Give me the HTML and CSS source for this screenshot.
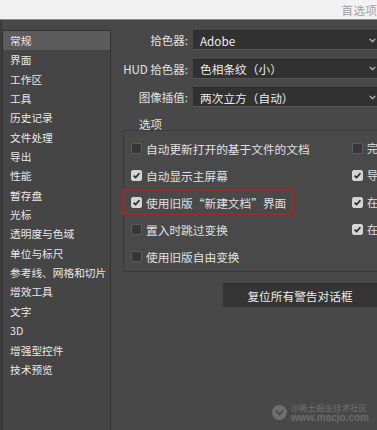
FILE: index.html
```html
<!DOCTYPE html>
<html lang="zh">
<head>
<meta charset="utf-8">
<title>首选项</title>
<link rel="stylesheet" href="styles.css">
</head>
<body>
<div class="window">
  <div class="titlebar"><span class="title">首选项</span></div>
  <div class="body">
    <nav class="sidebar">
      <div class="item selected">常规</div>
      <div class="item">界面</div>
      <div class="item">工作区</div>
      <div class="item">工具</div>
      <div class="item">历史记录</div>
      <div class="item">文件处理</div>
      <div class="item">导出</div>
      <div class="item">性能</div>
      <div class="item">暂存盘</div>
      <div class="item">光标</div>
      <div class="item">透明度与色域</div>
      <div class="item">单位与标尺</div>
      <div class="item">参考线、网格和切片</div>
      <div class="item">增效工具</div>
      <div class="item">文字</div>
      <div class="item">3D</div>
      <div class="item">增强型控件</div>
      <div class="item">技术预览</div>
    </nav>
    <main class="main">
      <div class="fields">
        <div class="field">
          <span class="field-label">拾色器:</span>
          <div class="select"><span>Adobe</span><svg class="chev" width="7" height="5" viewBox="0 0 7 5"><path d="M0.7 0.8 L3.5 3.6 L6.3 0.8" fill="none" stroke="#c4c4c4" stroke-width="1.2"/></svg></div>
        </div>
        <div class="field">
          <span class="field-label">HUD 拾色器:</span>
          <div class="select"><span>色相条纹（小）</span><svg class="chev" width="7" height="5" viewBox="0 0 7 5"><path d="M0.7 0.8 L3.5 3.6 L6.3 0.8" fill="none" stroke="#c4c4c4" stroke-width="1.2"/></svg></div>
        </div>
        <div class="field">
          <span class="field-label">图像插值:</span>
          <div class="select"><span>两次立方（自动）</span><svg class="chev" width="7" height="5" viewBox="0 0 7 5"><path d="M0.7 0.8 L3.5 3.6 L6.3 0.8" fill="none" stroke="#c4c4c4" stroke-width="1.2"/></svg></div>
        </div>
      </div>

      <section class="group">
        <div class="group-title">选项</div>
        <div class="group-box">
          <div class="opt"><span class="cb"></span><span>自动更新打开的基于文件的文档</span></div>
          <div class="opt"><span class="cb"></span><span class="edge">完</span></div>

          <div class="opt"><span class="cb on"><svg width="11" height="11" viewBox="0 0 11 11"><path d="M2.6 5.6 L4.6 7.6 L8.4 3.2" fill="none" stroke="#2a2a2a" stroke-width="1.7"/></svg></span><span>自动显示主屏幕</span></div>
          <div class="opt"><span class="cb on"><svg width="11" height="11" viewBox="0 0 11 11"><path d="M2.6 5.6 L4.6 7.6 L8.4 3.2" fill="none" stroke="#2a2a2a" stroke-width="1.7"/></svg></span><span class="edge">导</span></div>

          <div class="opt"><span class="cb on"><svg width="11" height="11" viewBox="0 0 11 11"><path d="M2.6 5.6 L4.6 7.6 L8.4 3.2" fill="none" stroke="#2a2a2a" stroke-width="1.7"/></svg></span><span>使用旧版“新建文档”界面</span><span class="mark"></span></div>
          <div class="opt"><span class="cb on"><svg width="11" height="11" viewBox="0 0 11 11"><path d="M2.6 5.6 L4.6 7.6 L8.4 3.2" fill="none" stroke="#2a2a2a" stroke-width="1.7"/></svg></span><span class="edge">在</span></div>

          <div class="opt"><span class="cb"></span><span>置入时跳过变换</span></div>
          <div class="opt"><span class="cb on"><svg width="11" height="11" viewBox="0 0 11 11"><path d="M2.6 5.6 L4.6 7.6 L8.4 3.2" fill="none" stroke="#2a2a2a" stroke-width="1.7"/></svg></span><span class="edge">在</span></div>

          <div class="opt"><span class="cb"></span><span>使用旧版自由变换</span></div>
          <div class="opt"></div>
        </div>
      </section>

      <div class="actions"><button class="btn">复位所有警告对话框</button></div>
    </main>
  </div>
  <div class="watermark">
    <span class="wm-logo"><svg width="15" height="15" viewBox="0 0 15 15"><circle cx="7.5" cy="7.5" r="7.5" fill="#6e6e6e"/><path d="M4 5.5 L7.5 9.5 L11 5.5" fill="none" stroke="#484848" stroke-width="1.6"/></svg></span>
    <span class="wm-text"><span class="wm-top">@稀土掘金技术社区</span><span class="wm-bot">www.macjo.com</span></span>
  </div>
</div>
</body>
</html>
```

FILE: styles.css
```css
* { box-sizing: border-box; }
html, body { margin: 0; padding: 0; }
body {
  background: #484848;
  font-family: "Noto Sans CJK SC", "Noto Sans", sans-serif;
}
.window {
  position: relative;
  width: 377px;
  height: 430px;
  overflow: hidden;
  background: #484848;
}
.titlebar {
  height: 20px;
  background: #f2f2f2;
  border-bottom: 1px solid #8a8a8a;
  display: flex;
  justify-content: flex-end;
  align-items: center;
  overflow: hidden;
}
.title {
  font-size: 11.5px;
  color: #a0a0a0;
  margin-right: 0;
  letter-spacing: 0.3px;
  line-height: 14px;
}
.body {
  display: flex;
  height: 410px;
  border-left: 2px solid #3c3c3c;
}
.sidebar {
  width: 109px;
  margin-top: 10px;
  background: #454545;
  border: 1px solid #323232;
  border-bottom: none;
  flex-shrink: 0;
}
.item {
  height: 19.35px;
  line-height: 19.35px;
  padding-left: 7px;
  font-size: 10.7px;
  color: #e8e8e8;
  white-space: nowrap;
}
.item.selected {
  background: #5c5c5c;
}
.main {
  flex: 1;
  min-width: 0;
  padding-top: 10px;
}
.fields {
  display: flex;
  flex-direction: column;
  gap: 8.5px;
}
.field {
  display: flex;
  align-items: center;
  height: 20px;
}
.field-label {
  width: 77px;
  text-align: right;
  font-size: 11.5px;
  color: #e2e2e2;
  white-space: nowrap;
  flex-shrink: 0;
}
.select {
  flex: 1;
  margin-left: 5px;
  margin-right: -6px;
  height: 20px;
  background: #313131;
  border-top: 1px solid #2a2a2a;
  border-bottom: 1px solid #555;
  display: flex;
  align-items: center;
  justify-content: space-between;
  padding: 0 7px 0 7px;
  font-size: 11.7px;
  color: #ececec;
}
.chev { display: block; }
.group {
  margin-top: 11px;
  margin-left: 12px;
}
.group-title {
  height: 12px;
  line-height: 12px;
  padding-left: 16px;
  font-size: 11.5px;
  color: #e2e2e2;
}
.group-box {
  margin-right: -12px;
  border: 1px solid #3a3a3a;
  border-radius: 3px;
  background: #494949;
  padding: 3.5px 0 1.5px 7px;
  display: grid;
  grid-template-columns: 221px 1fr;
  grid-auto-rows: 27px;
}
.opt {
  position: relative;
  display: flex;
  align-items: center;
  gap: 4px;
  font-size: 11.7px;
  color: #e0e0e0;
  white-space: nowrap;
}
.edge { font-size: 11px; }
.cb {
  width: 11px;
  height: 11px;
  flex-shrink: 0;
  border-radius: 2px;
  background: #363636;
  border: 1px solid #5c5c5c;
  display: block;
}
.cb.on {
  background: #d4d4d4;
  border-color: #d4d4d4;
}
.cb svg { display: block; margin: -1px; }
.mark {
  position: absolute;
  left: -9px;
  top: 0.5px;
  width: 171px;
  height: 26px;
  border: 2px solid #a8242b;
  border-radius: 1px;
}
.actions {
  margin-top: 11px;
  padding-left: 112px;
}
.btn {
  display: block;
  width: 154px;
  height: 24px;
  border: none;
  border-top: 1px solid #2c2c2c;
  background: #343434;
  color: #ececec;
  font-family: "Noto Sans CJK SC", "Noto Sans", sans-serif;
  font-size: 11.7px;
  padding: 0;
}
.watermark {
  position: absolute;
  left: 272px;
  top: 402px;
  display: flex;
  align-items: center;
  gap: 4px;
}
.wm-logo svg { display: block; }
.wm-text {
  display: flex;
  flex-direction: column;
}
.wm-top {
  font-size: 8.5px;
  line-height: 10px;
  color: #707070;
}
.wm-bot {
  font-size: 10px;
  line-height: 11px;
  font-weight: bold;
  color: #6c6c6c;
  font-family: "Liberation Sans", sans-serif;
}
```
